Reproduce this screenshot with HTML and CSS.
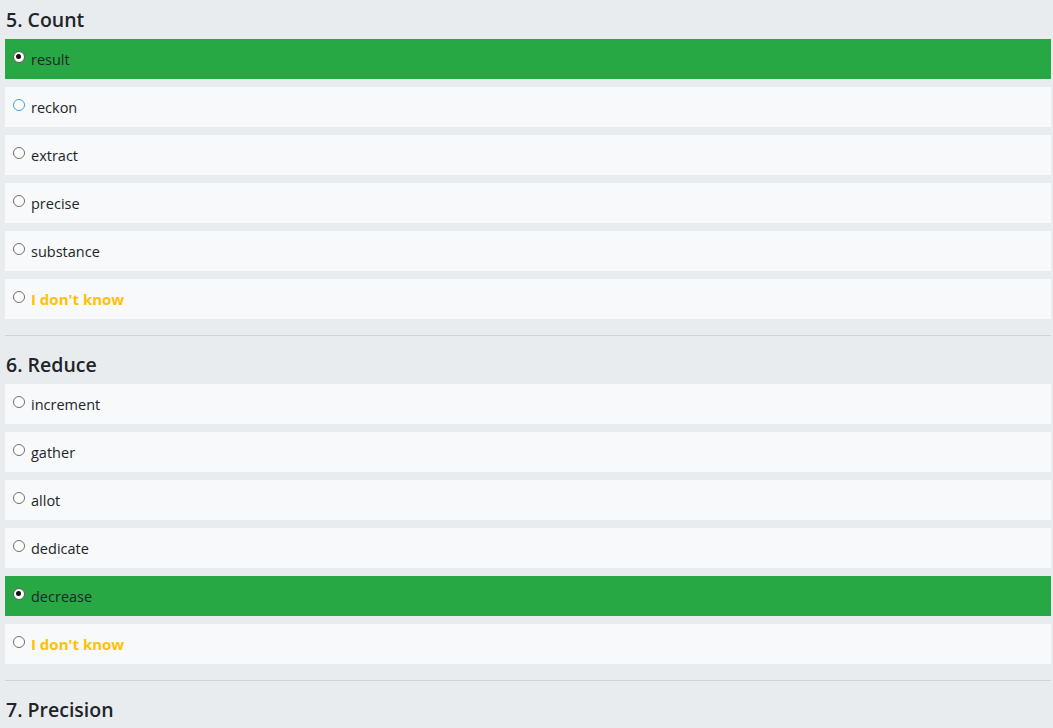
FILE: index.html
```html
<!DOCTYPE html>
<html lang="en">
<head>
<meta charset="utf-8">
<title>Quiz</title>
<link rel="stylesheet" href="styles.css">
</head>
<body>
<div class="page">
  <section class="question">
    <h4 class="q-title">5. Count</h4>
    <div class="options">
      <label class="option selected"><span class="radio checked"></span><span class="opt-text">result</span></label>
      <label class="option"><span class="radio hover"></span><span class="opt-text">reckon</span></label>
      <label class="option"><span class="radio"></span><span class="opt-text">extract</span></label>
      <label class="option"><span class="radio"></span><span class="opt-text">precise</span></label>
      <label class="option"><span class="radio"></span><span class="opt-text">substance</span></label>
      <label class="option"><span class="radio"></span><span class="opt-text unknown">I don't know</span></label>
    </div>
  </section>
  <hr class="divider">
  <section class="question">
    <h4 class="q-title">6. Reduce</h4>
    <div class="options">
      <label class="option"><span class="radio"></span><span class="opt-text">increment</span></label>
      <label class="option"><span class="radio"></span><span class="opt-text">gather</span></label>
      <label class="option"><span class="radio"></span><span class="opt-text">allot</span></label>
      <label class="option"><span class="radio"></span><span class="opt-text">dedicate</span></label>
      <label class="option selected"><span class="radio checked"></span><span class="opt-text">decrease</span></label>
      <label class="option"><span class="radio"></span><span class="opt-text unknown">I don't know</span></label>
    </div>
  </section>
  <hr class="divider">
  <section class="question">
    <h4 class="q-title">7. Precision</h4>
  </section>
</div>
</body>
</html>
```

FILE: styles.css
```css
* {
  box-sizing: border-box;
}

html, body {
  margin: 0;
  padding: 0;
  background: #e9ecef;
}

body {
  font-family: "Open Sans", "Noto Sans", sans-serif;
  color: #212529;
  overflow: hidden;
}

.page {
  padding: 0 2px 0 5px;
}

.q-title {
  margin: 0;
  height: 39px;
  padding: 8px 0 0 1px;
  font-size: 19.5px;
  line-height: 24px;
  font-weight: 600;
  color: #212529;
}

.options {
  display: flex;
  flex-direction: column;
  gap: 8px;
  padding-bottom: 8px;
}

.option {
  display: flex;
  align-items: center;
  height: 40px;
  padding-left: 8px;
  background: #f8f9fa;
  font-size: 14.5px;
}

.option.selected {
  background: #28a745;
}

.radio {
  width: 12px;
  height: 12px;
  border: 1.5px solid #6e6e6e;
  border-radius: 50%;
  background: #ffffff;
  margin: 0 6px 0 0;
  position: relative;
  top: -2px;
  flex: none;
}

.radio.hover {
  border-color: #3a9ee0;
}

.radio.checked {
  border-color: #5a5a5a;
}

.radio.checked::after {
  content: "";
  position: absolute;
  left: 2px;
  top: 2px;
  width: 5px;
  height: 5px;
  border-radius: 50%;
  background: #111111;
}

.opt-text.unknown {
  color: #ffc107;
  font-weight: 700;
  font-size: 15px;
}

.divider {
  margin: 8px 0 9px 0;
  border: 0;
  border-top: 1px solid #d0d3d6;
}
```
